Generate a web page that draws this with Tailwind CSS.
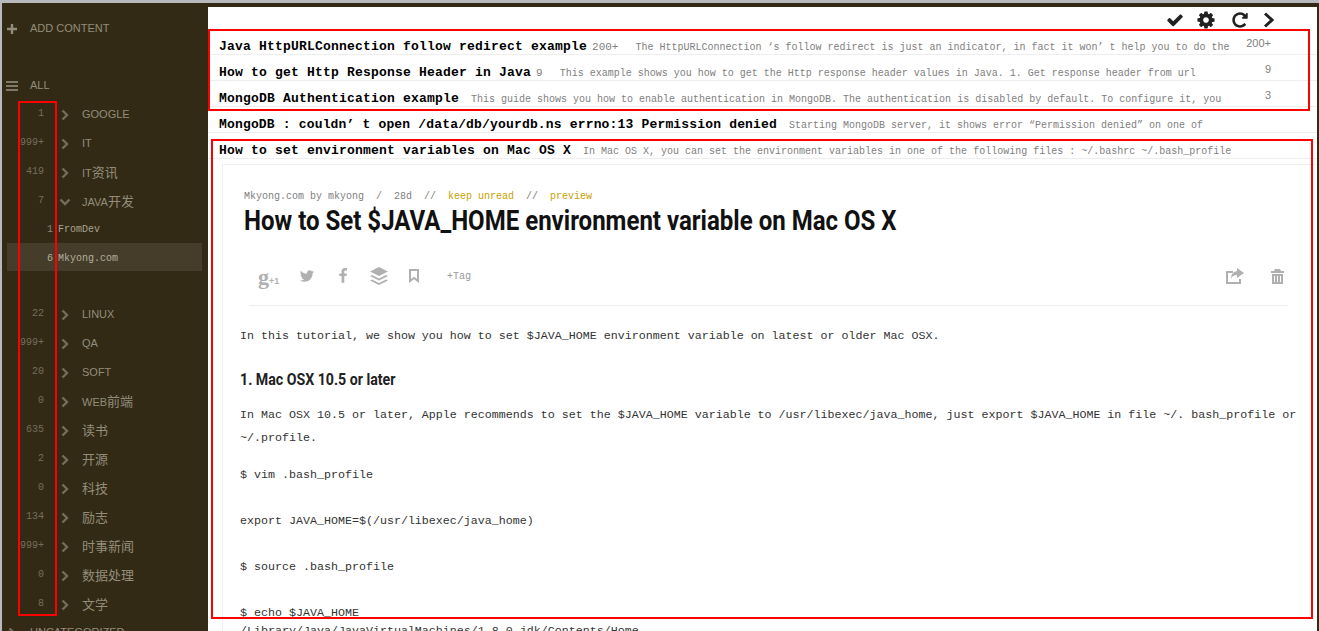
<!DOCTYPE html>
<html lang="en">
<head>
<meta charset="UTF-8">
<title>How to Set $JAVA_HOME environment variable on Mac OS X</title>
<script src="https://cdn.jsdelivr.net/npm/@tailwindcss/browser@4"></script>
</head>
<body class="h-screen overflow-hidden bg-[#332a15] font-['Liberation_Mono','Noto_Sans_CJK_SC',monospace]">
<svg class="hidden">
  <symbol id="chev-r" viewBox="0 0 8 12"><path d="M1.5 1.5 6 6l-4.500 4.500" fill="none" stroke="currentColor" stroke-width="2.400"/></symbol>
  <symbol id="chev-d" viewBox="0 0 12 8"><path d="M1.500 1.500 6 6l4.500-4.500" fill="none" stroke="currentColor" stroke-width="2.400"/></symbol>
</svg>

<div class="relative flex h-full overflow-hidden border-t-[3px] border-l-2 border-[#b9b9bd]">

  <!-- sidebar -->
  <aside class="w-[206px] shrink-0 pt-[11px] font-['Liberation_Sans','Noto_Sans_CJK_SC',sans-serif] text-[13px] text-[#928d7b]">
    <div class="flex h-[29px] items-center">
      <svg class="ml-[5px] h-[10px] w-[10px]" viewBox="0 0 10 10"><path d="M5 0v10M0 5h10" stroke="#928d7b" stroke-width="2.400"/></svg>
      <span class="ml-[13px] text-[11px]">ADD CONTENT</span>
    </div>
    <div class="mt-[28px] flex h-[29px] items-center">
      <svg class="ml-1 h-[10px] w-[12px]" viewBox="0 0 12 10"><path d="M0 1h12M0 5h12M0 9h12" stroke="#7d7868" stroke-width="2"/></svg>
      <span class="ml-3 text-[11px]">ALL</span>
    </div>

    <div class="flex h-[29px] items-center"><span class="w-[42px] pb-[2px] text-right font-['Liberation_Mono'] text-[10px] text-[#736e5c]">1</span><svg class="ml-[17px] h-[12px] w-[8px] text-[#736e5c]"><use href="#chev-r"/></svg><span class="ml-[13px] text-[11px]">GOOGLE</span></div>
    <div class="flex h-[29px] items-center"><span class="w-[42px] pb-[2px] text-right font-['Liberation_Mono'] text-[10px] text-[#736e5c]">999+</span><svg class="ml-[17px] h-[12px] w-[8px] text-[#736e5c]"><use href="#chev-r"/></svg><span class="ml-[13px] text-[11px]">IT</span></div>
    <div class="flex h-[29px] items-center"><span class="w-[42px] pb-[2px] text-right font-['Liberation_Mono'] text-[10px] text-[#736e5c]">419</span><svg class="ml-[17px] h-[12px] w-[8px] text-[#736e5c]"><use href="#chev-r"/></svg><span class="ml-[13px]"><span class="text-[11px]">IT</span>资讯</span></div>
    <div class="flex h-[29px] items-center"><span class="w-[42px] pb-[2px] text-right font-['Liberation_Mono'] text-[10px] text-[#736e5c]">7</span><svg class="ml-[15px] h-[8px] w-[12px] text-[#736e5c]"><use href="#chev-d"/></svg><span class="ml-[11px]"><span class="text-[11px]">JAVA</span>开发</span></div>

    <div class="flex h-[27px] items-center font-['Liberation_Mono','Noto_Sans_CJK_SC',monospace] text-[10px] text-[#a8a391]"><span class="w-[51px] text-right text-[10px] text-[#8a8573]">1</span><span class="ml-[5px]">FromDev</span></div>
    <div class="ml-[5px] flex h-[28px] w-[195px] items-center bg-[#453d2a] pt-[2px] font-['Liberation_Mono','Noto_Sans_CJK_SC',monospace] text-[10px] text-[#b3ae9c]"><span class="w-[46px] text-right text-[10px] text-[#b3ae9c]">6</span><span class="ml-[5px]">Mkyong.com</span></div>

    <div class="mt-[29px] flex h-[29px] items-center"><span class="w-[42px] pb-[2px] text-right font-['Liberation_Mono'] text-[10px] text-[#736e5c]">22</span><svg class="ml-[17px] h-[12px] w-[8px] text-[#736e5c]"><use href="#chev-r"/></svg><span class="ml-[13px] text-[11px]">LINUX</span></div>
    <div class="flex h-[29px] items-center"><span class="w-[42px] pb-[2px] text-right font-['Liberation_Mono'] text-[10px] text-[#736e5c]">999+</span><svg class="ml-[17px] h-[12px] w-[8px] text-[#736e5c]"><use href="#chev-r"/></svg><span class="ml-[13px] text-[11px]">QA</span></div>
    <div class="flex h-[29px] items-center"><span class="w-[42px] pb-[2px] text-right font-['Liberation_Mono'] text-[10px] text-[#736e5c]">20</span><svg class="ml-[17px] h-[12px] w-[8px] text-[#736e5c]"><use href="#chev-r"/></svg><span class="ml-[13px] text-[11px]">SOFT</span></div>
    <div class="flex h-[29px] items-center"><span class="w-[42px] pb-[2px] text-right font-['Liberation_Mono'] text-[10px] text-[#736e5c]">0</span><svg class="ml-[17px] h-[12px] w-[8px] text-[#736e5c]"><use href="#chev-r"/></svg><span class="ml-[13px]"><span class="text-[11px]">WEB</span>前端</span></div>
    <div class="flex h-[29px] items-center"><span class="w-[42px] pb-[2px] text-right font-['Liberation_Mono'] text-[10px] text-[#736e5c]">635</span><svg class="ml-[17px] h-[12px] w-[8px] text-[#736e5c]"><use href="#chev-r"/></svg><span class="ml-[13px]">读书</span></div>
    <div class="flex h-[29px] items-center"><span class="w-[42px] pb-[2px] text-right font-['Liberation_Mono'] text-[10px] text-[#736e5c]">2</span><svg class="ml-[17px] h-[12px] w-[8px] text-[#736e5c]"><use href="#chev-r"/></svg><span class="ml-[13px]">开源</span></div>
    <div class="flex h-[29px] items-center"><span class="w-[42px] pb-[2px] text-right font-['Liberation_Mono'] text-[10px] text-[#736e5c]">0</span><svg class="ml-[17px] h-[12px] w-[8px] text-[#736e5c]"><use href="#chev-r"/></svg><span class="ml-[13px]">科技</span></div>
    <div class="flex h-[29px] items-center"><span class="w-[42px] pb-[2px] text-right font-['Liberation_Mono'] text-[10px] text-[#736e5c]">134</span><svg class="ml-[17px] h-[12px] w-[8px] text-[#736e5c]"><use href="#chev-r"/></svg><span class="ml-[13px]">励志</span></div>
    <div class="flex h-[29px] items-center"><span class="w-[42px] pb-[2px] text-right font-['Liberation_Mono'] text-[10px] text-[#736e5c]">999+</span><svg class="ml-[17px] h-[12px] w-[8px] text-[#736e5c]"><use href="#chev-r"/></svg><span class="ml-[13px]">时事新闻</span></div>
    <div class="flex h-[29px] items-center"><span class="w-[42px] pb-[2px] text-right font-['Liberation_Mono'] text-[10px] text-[#736e5c]">0</span><svg class="ml-[17px] h-[12px] w-[8px] text-[#736e5c]"><use href="#chev-r"/></svg><span class="ml-[13px]">数据处理</span></div>
    <div class="flex h-[29px] items-center"><span class="w-[42px] pb-[2px] text-right font-['Liberation_Mono'] text-[10px] text-[#736e5c]">8</span><svg class="ml-[17px] h-[12px] w-[8px] text-[#736e5c]"><use href="#chev-r"/></svg><span class="ml-[13px]">文学</span></div>
    <div class="-mt-[1px] flex h-[29px] items-center"><svg class="ml-[6px] h-[12px] w-[8px] text-[#736e5c]"><use href="#chev-r"/></svg><span class="ml-[14px] text-[11px]">UNCATEGORIZED</span></div>
  </aside>

  <!-- main -->
  <main class="mt-1 mr-[2px] flex-1 overflow-hidden bg-white">
    <div class="flex h-[22px] items-center pt-[3px] text-[#222222]">
      <svg class="ml-[958px] h-[18px] w-[18px]" viewBox="0 0 1792 1792" fill="currentColor"><path d="M1671 566q0 40-28 68l-724 724-136 136q-28 28-68 28t-68-28l-136-136-362-362q-28-28-28-68t28-68l136-136q28-28 68-28t68 28l294 295 656-657q28-28 68-28t68 28l136 136q28 28 28 68z"/></svg>
      <svg class="ml-[12px] h-[20px] w-[20px]" viewBox="0 0 1792 1792" fill="currentColor"><path d="M1152 896q0-106-75-181t-181-75-181 75-75 181 75 181 181 75 181-75 75-181zm512-109v222q0 12-8 23t-20 13l-185 28q-19 54-39 91 35 50 107 138 10 12 10 25t-9 23q-27 37-99 108t-94 71q-12 0-26-9l-138-108q-44 23-91 38-16 136-29 186-7 28-36 28h-222q-14 0-24.5-8.5t-11.5-21.5l-28-184q-49-16-90-37l-141 107q-10 9-25 9-14 0-25-11-126-114-165-168-7-10-7-23 0-12 8-23 15-21 51-66.5t54-70.5q-27-50-41-99l-183-27q-13-2-21-12.5t-8-23.5v-222q0-12 8-23t19-13l186-28q14-46 39-92-40-57-107-138-10-12-10-24 0-10 9-23 26-36 98.5-107.5t94.5-71.5q13 0 26 10l138 107q44-23 91-38 16-136 29-186 7-28 36-28h222q14 0 24.5 8.5t11.5 21.5l28 184q49 16 90 37l142-107q9-9 24-9 13 0 25 10 129 119 165 170 7 8 7 22 0 12-8 23-15 21-51 66.5t-54 70.5q26 50 41 98l183 28q13 2 21 12.5t8 23.5z"/></svg>
      <svg class="ml-[15px] h-[18px] w-[18px]" viewBox="0 0 1792 1792" fill="currentColor"><path d="M1664 256v448q0 26-19 45t-45 19h-448q-42 0-59-40-17-39 14-69l138-138q-148-137-349-137-104 0-198.5 40.5t-163.5 109.5-109.5 163.5-40.5 198.5 40.5 198.5 109.5 163.5 163.5 109.5 198.5 40.5q119 0 225-52t179-147q7-10 23-12 15 0 25 9l137 138q9 8 9.5 20.500t-7.500 22.500q-109 132-264 204.500t-327 72.500q-156 0-298-61t-245-164-164-245-61-298 61-298 164-245 245-164 298-61q147 0 284.500 55.500t244.500 156.500l130-129q29-31 70-14 39 17 39 59z"/></svg>
      <svg class="ml-[14px] h-[16px] w-[12px]" viewBox="0 0 12 16"><path d="M2 1.500 9 8l-7 6.500" fill="none" stroke="currentColor" stroke-width="3"/></svg>
    </div>

    <div class="relative flex h-[26px] items-center whitespace-pre border-b border-[#eeeeee] pt-[11px] pl-[11px] text-[10px] text-[#808080]"><b class="text-[13px] tracking-[0.2px] text-black">Java HttpURLConnection follow redirect example</b><span class="ml-[5px] text-[11px]">200+</span><span class="ml-[17px]">The HttpURLConnection ‘s follow redirect is just an indicator, in fact it won’ t help you to do the</span><span class="absolute top-[6px] right-[46px] font-['Liberation_Sans'] text-[11px]">200+</span></div>
    <div class="relative flex h-[26px] items-center whitespace-pre border-b border-[#eeeeee] pt-[11px] pl-[11px] text-[10px] text-[#808080]"><b class="text-[13px] tracking-[0.2px] text-black">How to get Http Response Header in Java</b><span class="ml-[5px] text-[11px]">9</span><span class="ml-[17px]">This example shows you how to get the Http response header values in Java. 1. Get response header from url</span><span class="absolute top-[6px] right-[46px] font-['Liberation_Sans'] text-[11px]">9</span></div>
    <div class="relative flex h-[26px] items-center whitespace-pre border-b border-[#eeeeee] pt-[11px] pl-[11px] text-[10px] text-[#808080]"><b class="text-[13px] tracking-[0.2px] text-black">MongoDB Authentication example</b><span class="ml-[12px]">This guide shows you how to enable authentication in MongoDB. The authentication is disabled by default. To configure it, you</span><span class="absolute top-[6px] right-[46px] font-['Liberation_Sans'] text-[11px]">3</span></div>
    <div class="flex h-[26px] items-center whitespace-pre border-b border-[#eeeeee] pt-[11px] pl-[11px] text-[10px] text-[#808080]"><b class="text-[13px] tracking-[0.17px] text-black">MongoDB : couldn’ t open /data/db/yourdb.ns errno:13 Permission denied</b><span class="ml-[12px]">Starting MongoDB server, it shows error “Permission denied” on one of</span></div>
    <div class="flex h-[26px] items-center whitespace-pre border-b border-[#eeeeee] pt-[11px] pl-[11px] text-[10px] text-[#808080]"><b class="text-[13px] tracking-[0.2px] text-black">How to set environment variables on Mac OS X</b><span class="ml-[12px]">In Mac OS X, you can set the environment variables in one of the following files : ~/.bashrc ~/.bash_profile</span></div>

    <article class="mt-[5px] mr-[2px] ml-[14px] border-t border-l border-[#eeeeee] pt-[25px] pl-[17px] text-[11.67px] text-[#333333]">
      <div class="ml-1 h-[14px] whitespace-pre text-[10px] leading-[14px] text-[#808080]">Mkyong.com by mkyong  /  28d  //  <span class="text-[#c9a000]">keep unread</span>  //  <span class="text-[#c9a000]">preview</span></div>
      <h1 class="mt-[1px] ml-1 h-[32px] origin-left scale-x-[0.858] font-['Roboto',sans-serif] text-[28px] leading-[32px] font-bold text-[#111111]">How to Set $JAVA_HOME environment variable on Mac OS X</h1>

      <div class="mt-[27px] mr-[31px] ml-[10px] flex h-[24px] items-center text-[#b0b0b0]">
        <span class="ml-[8px] w-[41px] shrink-0 font-['Liberation_Serif'] text-[22px] font-bold">g<span class="font-['Liberation_Sans'] text-[9px]">+1</span></span>
        <svg class="h-[16px] w-[16px]" viewBox="0 0 1792 1792" fill="currentColor"><path d="M1684 408q-67 98-162 167 1 14 1 42 0 130-38 259.500t-115.500 248.500-184.500 210.500-258 146-323 54.500q-271 0-496-145 35 4 78 4 225 0 401-138-105-2-188-64.500t-114-159.500q33 5 61 5 43 0 85-11-112-23-185.500-111.500t-73.500-205.500v-4q68 38 146 41-66-44-105-115t-39-154q0-88 44-163 121 149 294.500 238.500t371.500 99.500q-8-38-8-74 0-134 94.500-228.500t228.500-94.500q140 0 236 102 109-21 205-78-37 115-142 178 92-10 184-50z"/></svg>
        <svg class="ml-[20px] h-[16px] w-[16px]" viewBox="0 0 1792 1792" fill="currentColor"><path d="M1343 12v264h-157q-86 0-116 36t-30 108v189h293l-39 296h-254v759h-306v-759h-255v-296h255v-218q0-186 104-288.500t277-102.500q147 0 228 12z"/></svg>
        <svg class="ml-[19px] h-[18px] w-[18px]" viewBox="0 0 18 18" fill="currentColor"><path d="M9 0l9 4.500-9 4.500-9-4.500zM2 8l7 3.500L16 8l2 1-9 4.500L0 9zM2 12.500 9 16l7-3.500 2 1L9 18l-9-4.500z"/></svg>
        <svg class="ml-[21px] h-[14px] w-[10px]" viewBox="0 0 10 14"><path d="M1 1h8v11L5 9l-4 3z" fill="none" stroke="currentColor" stroke-width="2"/></svg>
        <span class="ml-[28px] text-[10px] text-[#999999]">+Tag</span>
        <svg class="ml-auto h-[16px] w-[18px]" viewBox="0 0 18 16"><path d="M7 4H1v11h13v-4" fill="none" stroke="currentColor" stroke-width="2"/><path d="M11 0l7 5-7 5V7C8 7 6 8 5 11c0-5 2-7 6-8z" fill="currentColor"/></svg>
        <svg class="ml-[27px] h-[15px] w-[13px]" viewBox="0 0 13 15" fill="currentColor"><path d="M4 0h5l1 2h3v2H0V2h3zM1 5h11v10H1zm2 2v6h1V7zm3 0v6h1V7zm3 0v6h1V7z" fill-rule="evenodd"/></svg>
      </div>
      <hr class="mt-[17px] mr-[27px] ml-[9px] border-[#eeeeee]">

      <p class="mt-[19px] h-[23px] leading-[23px]">In this tutorial, we show you how to set $JAVA_HOME environment variable on latest or older Mac OSX.</p>
      <h3 class="mt-[19px] h-[24px] origin-left scale-x-[0.834] font-['Roboto',sans-serif] text-[17px] leading-[24px] font-bold text-[#222222]">1. Mac OSX 10.5 or later</h3>
      <p class="mt-[13px] leading-[23px]">In Mac OSX 10.5 or later, Apple recommends to set the $JAVA_HOME variable to /usr/libexec/java_home, just export $JAVA_HOME in file ~/. bash_profile or ~/.profile.</p>
      <pre class="mt-[14px] font-['Liberation_Mono',monospace] leading-[23px]">$ vim .bash_profile

export JAVA_HOME=$(/usr/libexec/java_home)

$ source .bash_profile

$ echo $JAVA_HOME
<span class="-mt-[5px] block">/Library/Java/JavaVirtualMachines/1.8.0.jdk/Contents/Home</span></pre>
    </article>
  </main>

  <!-- red annotation boxes drawn over the capture -->
  <div class="absolute top-[26px] left-[206px] h-[82px] w-[1102px] border-2 border-[#ff0000]"></div>
  <div class="absolute top-[136px] left-[209px] h-[480px] w-[1102px] border-2 border-[#ff0000]"></div>
  <div class="absolute top-[98px] left-[16px] h-[515px] w-[39px] border-2 border-[#ff0000]"></div>
</div>
</body>
</html>
